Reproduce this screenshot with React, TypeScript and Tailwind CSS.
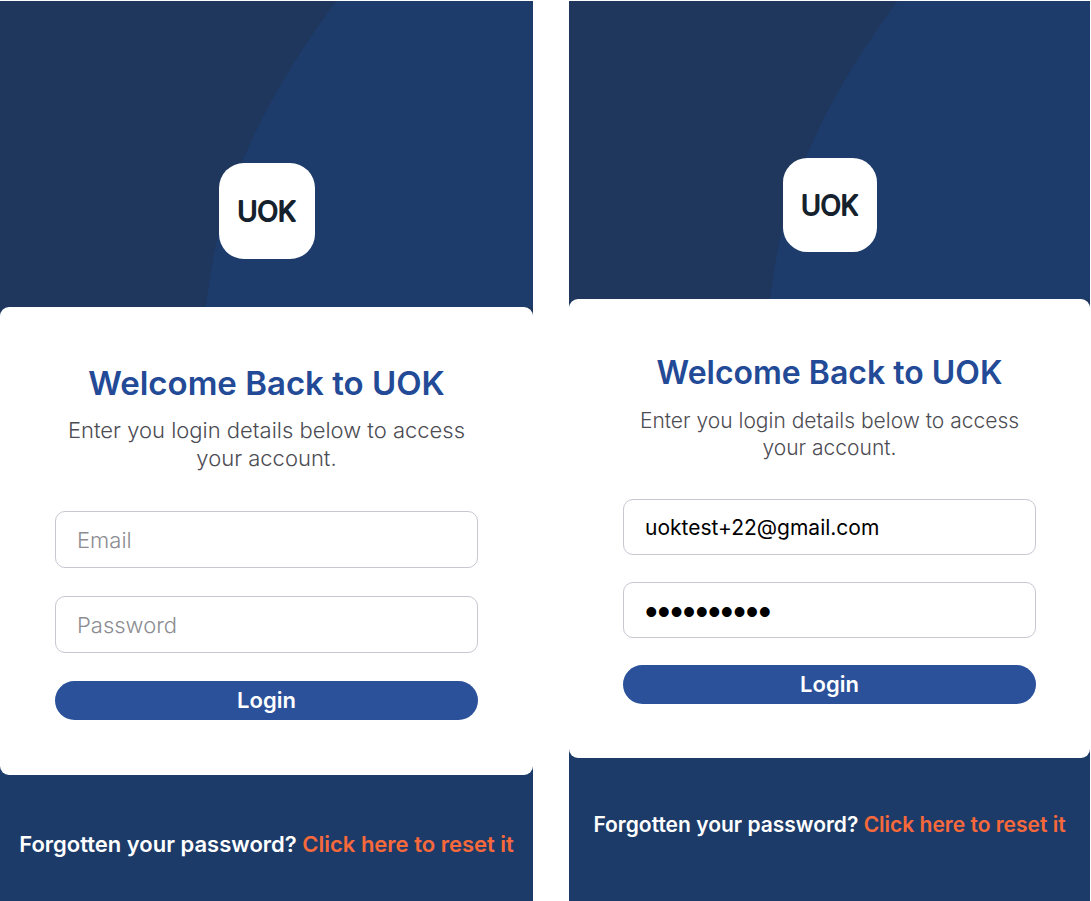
import React, { useState } from 'react';
import { clsx } from 'clsx';

interface LoginScreenProps {
  email?: string;
  password?: string;
  compact?: boolean;
}

const Logo = ({ compact }: { compact: boolean }) => (
  <svg
    viewBox="0 0 96 96"
    role="img"
    aria-label="UOK"
    className={clsx('relative', compact ? 'size-[94px]' : 'size-24')}
  >
    <rect width="96" height="96" rx="25" fill="#ffffff" />
    <text
      x="47.5"
      y="58"
      textAnchor="middle"
      className="[font-optical-sizing:none]"
      fontFamily="Inter, sans-serif"
      fontSize="27"
      fontWeight="300"
      fill="#15222d"
      stroke="#15222d"
      strokeWidth="2.2"
      strokeLinejoin="round"
    >
      UOK
    </text>
  </svg>
);

const HeroBackground = () => (
  <svg
    viewBox="0 0 533 306"
    preserveAspectRatio="none"
    aria-hidden="true"
    className="absolute inset-0 w-full h-full"
  >
    <rect width="533" height="306" fill="#1f375d" />
    <path d="M336 0 C274 86 219 178 206 306 H533 V0 Z" fill="#1d3b6b" />
  </svg>
);

const LoginScreen = ({ email = '', password = '', compact = false }: LoginScreenProps) => {
  const [emailValue, setEmailValue] = useState(email);
  const [passwordValue, setPasswordValue] = useState(password);

  const inputClass = clsx(
    'block w-full rounded-[10px] border border-[#c6c8d2] bg-white px-[21px] outline-none',
    'text-black placeholder:font-light placeholder:text-[#8c8c92]',
    compact ? 'h-14' : 'h-[57px]'
  );

  return (
    <section className="flex flex-col bg-[#1d3b69]">
      <div className={clsx('relative flex justify-center', compact ? 'pt-[157px] pb-[47px]' : 'pt-[162px] pb-12')}>
        <HeroBackground />
        <Logo compact={compact} />
        {/* fills the area behind the rounded corners of the card */}
        <div className="absolute top-full inset-x-0 h-3 bg-[#1f375d]" />
      </div>

      <main
        className={clsx(
          'relative rounded-[9px] bg-white',
          compact ? 'px-[54px] pt-[54px] pb-[54px]' : 'px-[55px] pt-14 pb-[55px]'
        )}
      >
        <h1
          className={clsx(
            'text-center font-semibold leading-10 text-[#234a96]',
            compact ? 'text-[32px]' : 'text-[33px]'
          )}
        >
          Welcome Back to UOK
        </h1>
        <p
          className={clsx(
            'text-center font-light text-[#4c4c53]',
            compact ? 'mt-[14px] text-[21px] leading-[27px]' : 'mt-[13px] text-[22px] leading-7'
          )}
        >
          Enter you login details below to access your account.
        </p>

        <form
          onSubmit={(e) => e.preventDefault()}
          className={clsx('flex flex-col', compact ? 'mt-[38px] gap-[27px]' : 'mt-[39px] gap-7')}
        >
          <input
            type="email"
            aria-label="Email"
            placeholder="Email"
            value={emailValue}
            onChange={(e) => setEmailValue(e.target.value)}
            className={clsx(inputClass, compact ? 'text-[21px]' : 'text-[22px]')}
          />
          <input
            type="password"
            aria-label="Password"
            placeholder="Password"
            value={passwordValue}
            onChange={(e) => setPasswordValue(e.target.value)}
            className={clsx(
              inputClass,
              passwordValue ? "pt-1 font-['Liberation_Sans',sans-serif] text-[36px]" : 'text-[22px]'
            )}
          />
          <button
            type="submit"
            className="h-[39px] w-full rounded-full bg-[#2b519b] text-[22px] font-semibold text-white"
          >
            Login
          </button>
        </form>
      </main>

      <footer
        className={clsx(
          'grow text-center font-semibold text-white leading-7',
          compact ? 'pt-[53px] text-[21px]' : 'pt-[55px] text-[22px]'
        )}
      >
        Forgotten your password?{' '}
        <a href="#reset" className="text-[#f7693a]">
          Click here to reset it
        </a>
      </footer>
    </section>
  );
};

const App = () => {
  return (
    <div className="grid min-h-screen grid-cols-[533fr_521fr] gap-9 bg-white pt-px pr-px font-['Inter',sans-serif]">
      <LoginScreen />
      <LoginScreen compact email="uoktest+22@gmail.com" password="password22" />
    </div>
  );
};

export default App;
